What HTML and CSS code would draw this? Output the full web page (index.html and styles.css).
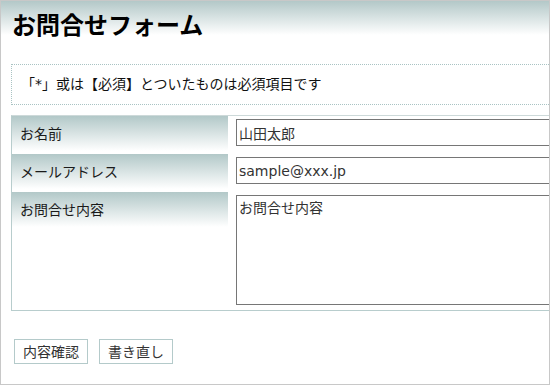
FILE: index.html
```html
<!DOCTYPE html>
<html lang="ja">
<head>
  <meta charset="UTF-8" />
  <meta name="viewport" content="width=device-width, initial-scale=1.0" />
  <title>お問合せフォーム</title>
  <link rel="stylesheet" href="styles.css">
</head>
<body>
  <div class="frame">
    <div class="page">
      <h1 class="title">お問合せフォーム</h1>
      <p class="notice">「*」或は【必須】とついたものは必須項目です</p>

      <form class="contact" onsubmit="return false;">
        <table class="form-table">
          <tr>
            <th>お名前</th>
            <td><input class="field" type="text" value="山田太郎" /></td>
          </tr>
          <tr>
            <th>メールアドレス</th>
            <td><input class="field" type="text" value="sample@xxx.jp" /></td>
          </tr>
          <tr class="last">
            <th>お問合せ内容</th>
            <td><textarea class="field area">お問合せ内容</textarea></td>
          </tr>
        </table>

        <div class="actions">
          <button class="btn" type="submit">内容確認</button>
          <button class="btn" type="reset">書き直し</button>
        </div>
      </form>
    </div>
  </div>
</body>
</html>
```

FILE: styles.css
```css
body {
  margin: 0;
  font-family: "DejaVu Sans", "Noto Sans CJK JP", sans-serif;
  color: #222;
  background: #fff;
}
.frame {
  width: 550px;
  height: 385px;
  box-sizing: border-box;
  border: 1px solid #c8c8c8;
  overflow: hidden;
}
.page {
  width: 640px;
}
.title {
  margin: 0;
  height: 40px;
  box-sizing: border-box;
  padding: 6px 0 0 11px;
  font-family: "Noto Sans CJK JP", sans-serif;
  font-size: 24px;
  line-height: 34px;
  font-weight: 700;
  color: #000;
  background: linear-gradient(#b3c8c8, #fff 34px);
}
.notice {
  margin: 23px 0 0 10px;
  padding: 0 0 0 9px;
  border: 1px dotted #a9c3c3;
  font-size: 14px;
  line-height: 39px;
  color: #111;
}
.contact {
  margin: 0;
}
.form-table {
  margin: 10px 0 0 10px;
  width: 620px;
  table-layout: fixed;
  border-spacing: 0;
  border: 1px solid #b8cdcd;
  border-top-color: #cdd9d9;
  font-size: 14px;
}
.form-table th {
  width: 200px;
  padding: 9px 8px;
  text-align: left;
  vertical-align: top;
  font-weight: 400;
  line-height: 18px;
  color: #1a1a1a;
  background: linear-gradient(#b2c8c8, #fff 35px) no-repeat;
  border-bottom: 1px solid #fff;
}
.form-table td {
  padding: 3px 8px 7px;
  vertical-align: top;
  border-bottom: 1px solid #fff;
}
.form-table .last th,
.form-table .last td {
  border-bottom: none;
}
.form-table .last td {
  padding-bottom: 5px;
}
.field {
  display: block;
  width: 400px;
  height: 27px;
  box-sizing: border-box;
  margin: 0;
  padding: 0 2px;
  border: 1px solid #767676;
  border-radius: 0;
  font-family: "DejaVu Sans", "Noto Sans CJK JP", sans-serif;
  font-size: 14px;
  color: #333;
  background: #fff;
}
.area {
  height: 110px;
  padding: 3px 2px;
  line-height: 18px;
  resize: none;
}
.actions {
  display: flex;
  gap: 11px;
  margin-top: 28px;
  padding-left: 13px;
}
.btn {
  height: 25px;
  margin: 0;
  padding: 0 8px;
  border: 1px solid #b4caca;
  border-radius: 0;
  background: #fff;
  font-family: "Noto Sans CJK JP", sans-serif;
  font-size: 14px;
  line-height: 23px;
  color: #333;
  cursor: pointer;
}
```
